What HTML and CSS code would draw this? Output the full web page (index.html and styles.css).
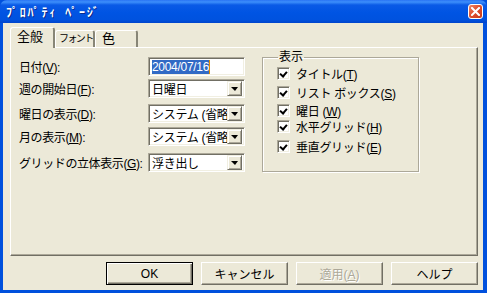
FILE: index.html
```html
<!DOCTYPE html>
<html>
  <head>
    <title>プロパティ ページ</title>
    <link rel="stylesheet" href="styles.css">
  </head>
  <body>
    <div class="window">
      <div class="titlebar">
        <span class="title">ﾌﾟﾛﾊﾟﾃｨ ﾍﾟｰｼﾞ</span>
        <span class="close-button">
          <svg width="9" height="9" viewBox="0 0 9 9">
            <path d="M1 1 L8 8 M8 1 L1 8" stroke="#fff" stroke-width="2" stroke-linecap="square"/>
          </svg>
        </span>
      </div>

      <div class="client">
        <div class="tabs">
          <div class="tab tab-active">全般</div>
          <div class="tab">フォント</div>
          <div class="tab">色</div>
        </div>

        <div class="panel">
          <div class="form">
            <div class="form-row">
              <span class="form-label">日付(<u>V</u>):</span>
              <span class="text-box"><span class="selected-text">2004/07/16</span><span class="caret"></span></span>
            </div>
            <div class="form-row">
              <span class="form-label">週の開始日(<u>F</u>):</span>
              <span class="combo-box"><span class="combo-text">日曜日</span><span class="combo-arrow"></span></span>
            </div>
            <div class="form-row">
              <span class="form-label">曜日の表示(<u>D</u>):</span>
              <span class="combo-box"><span class="combo-text">システム (省略</span><span class="combo-arrow"></span></span>
            </div>
            <div class="form-row">
              <span class="form-label">月の表示(<u>M</u>):</span>
              <span class="combo-box"><span class="combo-text">システム (省略</span><span class="combo-arrow"></span></span>
            </div>
            <div class="form-row">
              <span class="form-label">グリッドの立体表示(<u>G</u>):</span>
              <span class="combo-box"><span class="combo-text">浮き出し</span><span class="combo-arrow"></span></span>
            </div>
          </div>

          <fieldset class="group-box">
            <legend class="group-title">表示</legend>
            <div class="check-row"><span class="check-box"></span><span>タイトル(<u>T</u>)</span></div>
            <div class="check-row"><span class="check-box"></span><span>リスト ボックス(<u>S</u>)</span></div>
            <div class="check-row"><span class="check-box"></span><span>曜日 (<u>W</u>)</span></div>
            <div class="check-row"><span class="check-box"></span><span>水平グリッド(<u>H</u>)</span></div>
            <div class="check-row"><span class="check-box"></span><span>垂直グリッド(<u>E</u>)</span></div>
          </fieldset>
        </div>

        <div class="button-row">
          <button class="dialog-button default-button">OK</button>
          <button class="dialog-button">キャンセル</button>
          <button class="dialog-button disabled-button">適用(<u>A</u>)</button>
          <button class="dialog-button">ヘルプ</button>
        </div>
      </div>
    </div>
  </body>
</html>
```

FILE: styles.css
```css
body {
  margin: 0;
  overflow: hidden;
  font-family: "Liberation Sans", "Noto Sans CJK JP", sans-serif;
  font-size: 12px;
  color: black;
}

u {
  text-decoration: underline;
  text-underline-offset: 1px;
}

.window {
  width: 487px;
  height: 293px;
  display: flex;
  flex-direction: column;
  background-color: #0050dd;
}

.titlebar {
  height: 23px;
  flex: none;
  display: flex;
  align-items: center;
  justify-content: space-between;
  padding: 0 4px 0 6px;
  box-sizing: border-box;
  background: linear-gradient(#2a74f4 0, #3d8ffb 2px, #0a5ae6 5px, #0054e3 55%, #0052df 85%, #0045cc 100%);
  border-radius: 7px 7px 0 0;
}

.title {
  color: white;
  font-weight: bold;
  font-size: 12px;
  letter-spacing: 1.8px;
  word-spacing: 3px;
  white-space: pre;
  text-shadow: 1px 1px #0a2a8a;
}

.close-button {
  width: 15px;
  height: 15px;
  box-sizing: border-box;
  border: 1px solid white;
  border-radius: 3px;
  background: linear-gradient(135deg, #f08a6a, #e0512f 45%, #c63a1c);
  display: flex;
  align-items: center;
  justify-content: center;
}

.client {
  flex: 1;
  margin: 0 4px 3px 3px;
  background-color: #ece9d8;
  padding: 5px 5px 0 7px;
  display: flex;
  flex-direction: column;
}

.tabs {
  display: flex;
  align-items: flex-end;
  height: 19px;
  position: relative;
  z-index: 1;
}

.tab {
  height: 17px;
  padding: 0 6px 0 5px;
  box-sizing: border-box;
  border-top: 1px solid white;
  border-left: 1px solid white;
  border-right: 2px solid #888677;
  border-radius: 3px 3px 0 0;
  line-height: 16px;
  white-space: nowrap;
  overflow: hidden;
  background-color: #ece9d8;
}

.tab-active {
  height: 21px;
  width: 45px;
  margin-bottom: -1px;
  padding-left: 6px;
  font-size: 13px;
  line-height: 18px;
}

.tab:nth-child(2) {
  width: 40px;
  font-size: 10px;
  letter-spacing: -1.6px;
  padding: 0 0 0 3px;
}

.tab:nth-child(3) {
  width: 43px;
  padding-left: 6px;
  font-size: 13px;
}

.panel {
  height: 209px;
  box-sizing: border-box;
  border-top: 1px solid white;
  border-left: 1px solid white;
  border-right: 1px solid #716f64;
  border-bottom: 1px solid #716f64;
  box-shadow: inset -1px -1px #aca899;
  padding: 9px 0 0 8px;
  display: flex;
  align-items: flex-start;
}

.form {
  width: 226px;
}

.form-row {
  display: flex;
  align-items: center;
  height: 19px;
  font-size: 12px;
}

.form-row:nth-child(2) { margin-top: 3px; }
.form-row:nth-child(3) { margin-top: 6px; }
.form-row:nth-child(4) { margin-top: 4px; }
.form-row:nth-child(5) { margin-top: 7px; }

.form-label {
  width: 129px;
  white-space: nowrap;
  letter-spacing: -0.4px;
}

.text-box,
.combo-box {
  width: 97px;
  height: 19px;
  box-sizing: border-box;
  background-color: white;
  border-top: 1px solid #aca899;
  border-left: 1px solid #aca899;
  border-right: 1px solid white;
  border-bottom: 1px solid white;
  box-shadow: inset 1px 1px #716f64, inset -1px -1px #f1efe2;
  display: flex;
  align-items: center;
  overflow: hidden;
}

.text-box {
  padding-left: 3px;
}

.selected-text {
  background-color: #316ac5;
  color: white;
  font-size: 12px;
  line-height: 14px;
  letter-spacing: -0.3px;
}

.caret {
  width: 1px;
  height: 14px;
  background-color: #e08a00;
}

.combo-box {
  padding: 0 2px 0 3px;
}

.combo-text {
  flex: 1;
  font-size: 12px;
  letter-spacing: -0.3px;
  white-space: nowrap;
  overflow: hidden;
}

.combo-arrow {
  width: 15px;
  height: 15px;
  flex: none;
  box-sizing: border-box;
  background-color: #ece9d8;
  border-top: 1px solid #f1efe2;
  border-left: 1px solid #f1efe2;
  border-right: 1px solid #716f64;
  border-bottom: 1px solid #716f64;
  box-shadow: inset 1px 1px white, inset -1px -1px #aca899;
  display: flex;
  align-items: center;
  justify-content: center;
}

.combo-arrow::after {
  content: "";
  border-left: 4px solid transparent;
  border-right: 3px solid transparent;
  border-top: 4px solid black;
  margin-top: 1px;
}

.group-box {
  width: 157px;
  height: 121px;
  box-sizing: border-box;
  margin: -6px 0 0 17px;
  padding: 3px 0 0 14px;
  border: 1px solid #aca899;
  box-shadow: inset 1px 1px white, 1px 1px white;
  min-width: 0;
}

.group-title {
  padding: 0 1px;
  margin-left: 1px;
  font-size: 12px;
  line-height: 13px;
}

.check-row {
  display: flex;
  align-items: center;
  height: 13px;
  gap: 6px;
  font-size: 12px;
  white-space: nowrap;
  letter-spacing: -0.3px;
}

.check-row:nth-child(3) { margin-top: 6px; }
.check-row:nth-child(4) { margin-top: 5px; }
.check-row:nth-child(5) { margin-top: 3px; }
.check-row:nth-child(6) { margin-top: 7px; }

.check-box {
  width: 13px;
  height: 13px;
  flex: none;
  box-sizing: border-box;
  background-color: white;
  border-top: 1px solid #aca899;
  border-left: 1px solid #aca899;
  border-right: 1px solid white;
  border-bottom: 1px solid white;
  box-shadow: inset 1px 1px #716f64, inset -1px -1px #f1efe2;
  position: relative;
}

.check-box::after {
  content: "";
  position: absolute;
  left: 3px;
  top: 2px;
  width: 3px;
  height: 5px;
  border-right: 2px solid black;
  border-bottom: 2px solid black;
  transform: rotate(40deg);
}

.button-row {
  display: flex;
  justify-content: flex-end;
  gap: 8px;
  margin-top: 6px;
}

.dialog-button {
  width: 87px;
  height: 23px;
  box-sizing: border-box;
  background-color: #ece9d8;
  border-top: 1px solid white;
  border-left: 1px solid white;
  border-right: 1px solid #716f64;
  border-bottom: 1px solid #716f64;
  box-shadow: inset -1px -1px #aca899;
  font-family: "Liberation Sans", "Noto Sans CJK JP", sans-serif;
  font-size: 12px;
  padding: 0;
  color: black;
}

.default-button {
  border: 1px solid black;
  box-shadow: inset 1px 1px white, inset -1px -1px #716f64, inset -2px -2px #aca899;
}

.disabled-button {
  color: #aca899;
  text-shadow: 1px 1px white;
}
```
